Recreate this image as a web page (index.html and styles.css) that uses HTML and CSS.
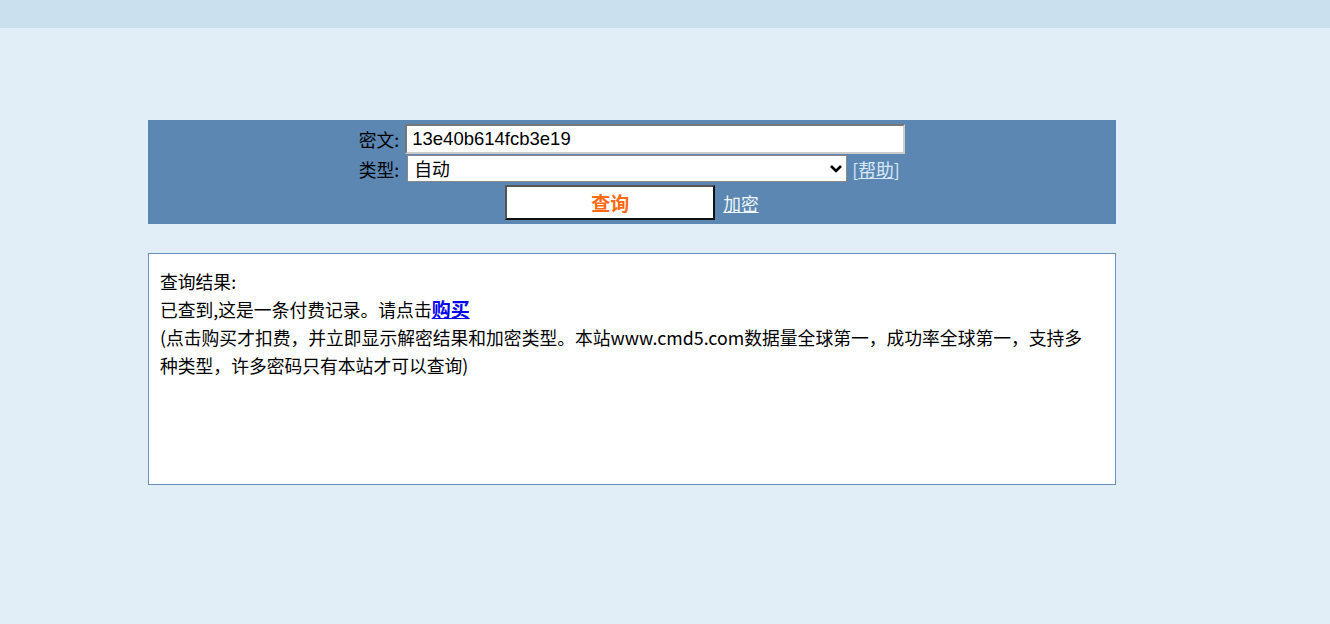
FILE: index.html
```html
<!DOCTYPE html>
<html lang="zh-CN">
<head>
    <meta charset="UTF-8">
    <title>cmd5 查询</title>
    <link rel="stylesheet" href="styles.css">
</head>
<body>
    <div class="topbar"></div>

    <div class="wrap">
        <form class="query" onsubmit="return false;">
            <div class="query-grid">
                <label class="lbl" for="cipher">密文:</label>
                <div class="field">
                    <input type="text" id="cipher" class="txt" value="13e40b614fcb3e19">
                </div>

                <label class="lbl" for="kind">类型:</label>
                <div class="field">
                    <span class="sel-box">
                        <select id="kind" class="sel">
                            <option>自动</option>
                            <option>md5</option>
                            <option>sha1</option>
                        </select>
                        <svg class="sel-arrow" width="14" height="10" viewBox="0 0 14 10">
                            <path d="M2 2 L7 7 L12 2" fill="none" stroke="#000" stroke-width="2.6"/>
                        </svg>
                    </span>
                    <a class="help" href="#">[<u>帮助</u>]</a>
                </div>

                <div class="actions">
                    <button type="submit" class="btn">查询</button>
                    <a class="link" href="#">加密</a>
                </div>
            </div>
        </form>

        <div class="result">
            <p>查询结果:</p>
            <p>已查到,这是一条付费记录。请点击<a class="buy" href="#">购买</a></p>
            <p>(点击购买才扣费，并立即显示解密结果和加密类型。本站www.cmd5.com数据量全球第一，成功率全球第一，支持多种类型，许多密码只有本站才可以查询)</p>
        </div>
    </div>
</body>
</html>
```

FILE: styles.css
```css
body {
    margin: 0;
    background: #e1eef7;
    font-family: "Noto Sans CJK SC", "Microsoft YaHei", sans-serif;
    font-size: 17.8px;
    color: #000;
}

.topbar {
    height: 28px;
    background: #cbe0ef;
}

.wrap {
    width: 968px;
    margin: 92px 0 0 148px;
}

/* search form */
.query {
    background: #5b87b2;
    padding: 4px 0 4px;
}

.query-grid {
    display: grid;
    grid-template-columns: auto 500px;
    column-gap: 6px;
    row-gap: 1px;
    justify-content: center;
    align-items: center;
}

.lbl {
    text-align: right;
    line-height: 26px;
}

.field {
    display: flex;
    align-items: center;
}

.txt {
    box-sizing: border-box;
    width: 500px;
    height: 30px;
    margin: 0;
    padding: 0 5px;
    border: 2px solid #777;
    border-right-color: #ccc;
    border-bottom-color: #ccc;
    background: #fff;
    font-family: "Liberation Sans", Arial, sans-serif;
    font-size: 18.5px;
    color: #000;
}

.sel-box {
    position: relative;
    margin-left: 2px;
}

.sel {
    box-sizing: border-box;
    width: 440px;
    height: 27px;
    margin: 0;
    padding: 0 6px;
    border: 1px solid #888;
    background: #fff;
    appearance: none;
    -webkit-appearance: none;
    border-radius: 0;
    font-family: "Noto Sans CJK SC", sans-serif;
    font-size: 17.8px;
    line-height: 25px;
    color: #000;
    display: block;
}

.sel-arrow {
    position: absolute;
    right: 4px;
    top: 9px;
    pointer-events: none;
}

.help {
    margin-left: 5px;
    color: #d8e9fb;
    text-decoration: none;
    line-height: 26px;
}

.help u {
    text-decoration: underline;
}

.actions {
    grid-column: 1 / 3;
    display: flex;
    justify-content: center;
    align-items: center;
    gap: 8px;
    margin-top: 2px;
}

.btn {
    box-sizing: border-box;
    width: 210px;
    height: 35px;
    margin: 0;
    background: #fff;
    border: 2px solid #111;
    border-top-color: #555;
    border-left-color: #555;
    color: #ff6a13;
    font-family: "Noto Sans CJK SC", sans-serif;
    font-size: 19px;
    font-weight: bold;
    cursor: pointer;
}

.link {
    color: #f2f7fc;
    text-decoration: underline;
}

/* result panel */
.result {
    box-sizing: border-box;
    height: 232px;
    margin-top: 29px;
    padding: 13px 20px 0 11px;
    background: #fff;
    border: 1px solid #6a8fbf;
    line-height: 28px;
}

.result p {
    margin: 0;
}

.buy {
    color: #0000f0;
    font-weight: bold;
    font-size: 19px;
}
```
